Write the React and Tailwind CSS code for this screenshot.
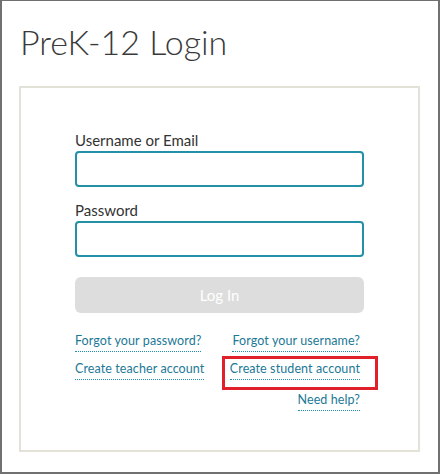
import React from "react";

function DotLink({ children }) {
  return (
    <a
      href="#"
      className="inline-block border-b border-dotted border-[#1f8fae] pb-[2px] text-[12.5px] leading-[17px] tracking-[0.1px] text-[#1c7896]"
    >
      {children}
    </a>
  );
}

export default function App() {
  return (
    <div
      className="h-[474px] w-[440px] overflow-hidden border-2 border-t border-[#707070] bg-white text-[#333]"
      style={{ fontFamily: "Lato, 'Open Sans', sans-serif" }}
    >
      <h1 className="pl-[18px] pt-[21px] text-[34px] font-light leading-[40px] text-[#3a3a3a]">
        PreK-12 Login
      </h1>

      <div className="ml-[17px] mt-[24px] h-[366px] w-[401px] border-2 border-[#e3e2d8] px-[54px] pt-[42px]">
        <label className="block text-[15px] leading-[20px] text-[#333]">
          Username or Email
        </label>
        <input className="mt-[1px] block h-[36px] w-full rounded-[4px] border-2 border-[#2390a8] outline-none" />

        <label className="mt-[13px] block text-[15px] leading-[20px] text-[#333]">
          Password
        </label>
        <input
          type="password"
          className="mt-[1px] block h-[36px] w-full rounded-[4px] border-2 border-[#2390a8] outline-none"
        />

        <button className="mt-[20px] flex h-[36px] w-full items-center justify-center rounded-[6px] bg-[#dddddd] text-[15px] text-white">
          Log In
        </button>

        <div className="mt-[19px] grid grid-cols-2 gap-y-[8px] pr-[4px]">
          <div className="flex">
            <DotLink>Forgot your password?</DotLink>
          </div>
          <div className="flex justify-end">
            <DotLink>Forgot your username?</DotLink>
          </div>
          <div className="flex">
            <DotLink>Create teacher account</DotLink>
          </div>
          <div className="flex justify-end">
            <span className="relative flex">
              <DotLink>Create student account</DotLink>
              <span className="pointer-events-none absolute -bottom-[10px] -left-[8px] -right-[18px] -top-[4px] border-[3px] border-[#e0212b]" />
            </span>
          </div>
          <div />
          <div className="mt-[3px] flex justify-end">
            <DotLink>Need help?</DotLink>
          </div>
        </div>
      </div>
    </div>
  );
}
